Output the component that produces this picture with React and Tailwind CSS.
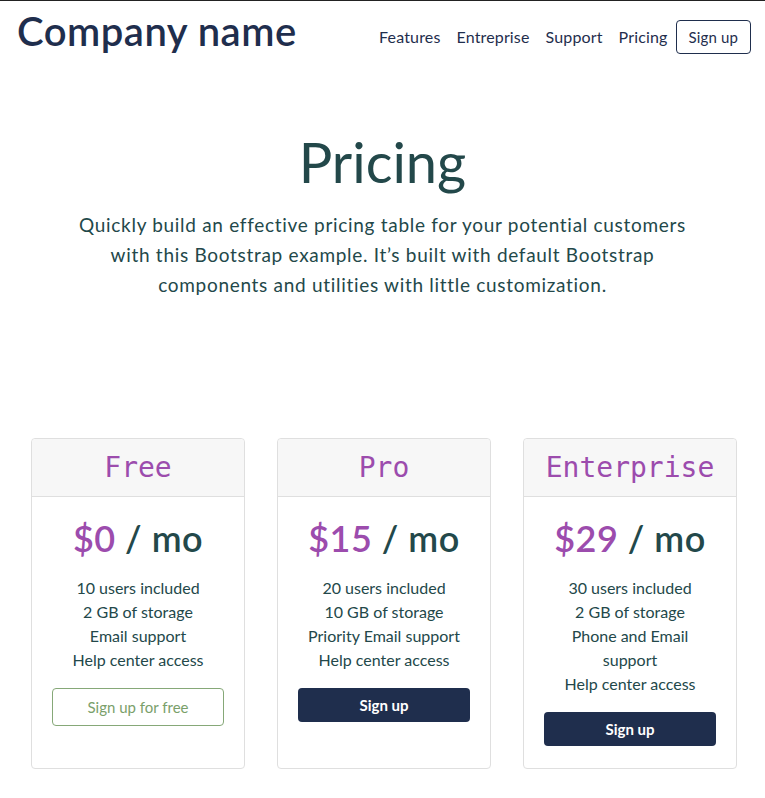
const plans = [
  {
    name: "Free",
    price: "$0",
    features: ["10 users included", "2 GB of storage", "Email support", "Help center access"],
    cta: "Sign up for free",
    outline: true,
  },
  {
    name: "Pro",
    price: "$15",
    features: ["20 users included", "10 GB of storage", "Priority Email support", "Help center access"],
    cta: "Sign up",
  },
  {
    name: "Enterprise",
    price: "$29",
    features: ["30 users included", "2 GB of storage", "Phone and Email support", "Help center access"],
    cta: "Sign up",
  },
];

const PlanCard = ({ plan }) => {
  return (
    <div className="flex flex-col rounded border border-[#dfdfdf] bg-white">
      <div className="h-[58px] flex items-center justify-center bg-[#f7f7f7] border-b border-[#dfdfdf] rounded-t">
        <h4 className="text-[28px] text-[#9c4cad] font-['DejaVu_Sans_Mono',monospace]">{plan.name}</h4>
      </div>
      <div className="flex flex-col px-5 pt-5 pb-[22px] text-center">
        <h1 className="text-[36px] leading-[43px] font-semibold text-[#23484a] mb-2 tracking-[0.5px]">
          <span className="text-[#9c4cad]">{plan.price}</span> / mo
        </h1>
        <ul className="mt-2 mb-4 text-[16px] leading-[24px] text-[#23484a]">
          {plan.features.map((f) => (
            <li key={f}>{f}</li>
          ))}
        </ul>
        {plan.outline ? (
          <button className="h-[38px] rounded border border-[#86a878] text-[#7aa06a] text-[15px]">
            {plan.cta}
          </button>
        ) : (
          <button className="h-[34px] rounded bg-[#1f2e4d] text-white text-[15px] font-bold">
            {plan.cta}
          </button>
        )}
      </div>
    </div>
  );
};

export default function App() {
  return (
    <div className="min-h-[798px] bg-white border-t border-[#222] font-['Lato',sans-serif]">
      <header className="flex items-center justify-between pl-[17px] pr-[14px] pt-[5px]">
        <div className="text-[40px] leading-[50px] font-semibold text-[#1f2e4d] tracking-[0.5px]">
          Company name
        </div>
        <nav className="flex items-center gap-4 text-[16px] text-[#1f2e4d] mt-[12px] tracking-[0.15px]">
          <a>Features</a>
          <a>Entreprise</a>
          <a>Support</a>
          <a>Pricing</a>
          <a className="-ml-[8px] border border-[#1f2e4d] rounded px-[12px] h-[34px] flex items-center text-[15px]">
            Sign up
          </a>
        </nav>
      </header>

      <section className="text-center mt-[72px]">
        <h1 className="text-[56px] leading-[67px] font-normal text-[#23484a]">Pricing</h1>
        <p className="mt-[15px] mx-auto max-w-[700px] text-[19px] leading-[30px] text-[#23484a] tracking-[0.7px]">
          Quickly build an effective pricing table for your potential customers
          <br />
          with this Bootstrap example. It’s built with default Bootstrap
          <br />
          components and utilities with little customization.
        </p>
      </section>

      <section className="grid grid-cols-3 gap-8 px-[31px] mt-[138px] pr-[28px]">
        {plans.map((p) => (
          <PlanCard key={p.name} plan={p} />
        ))}
      </section>
    </div>
  );
}
